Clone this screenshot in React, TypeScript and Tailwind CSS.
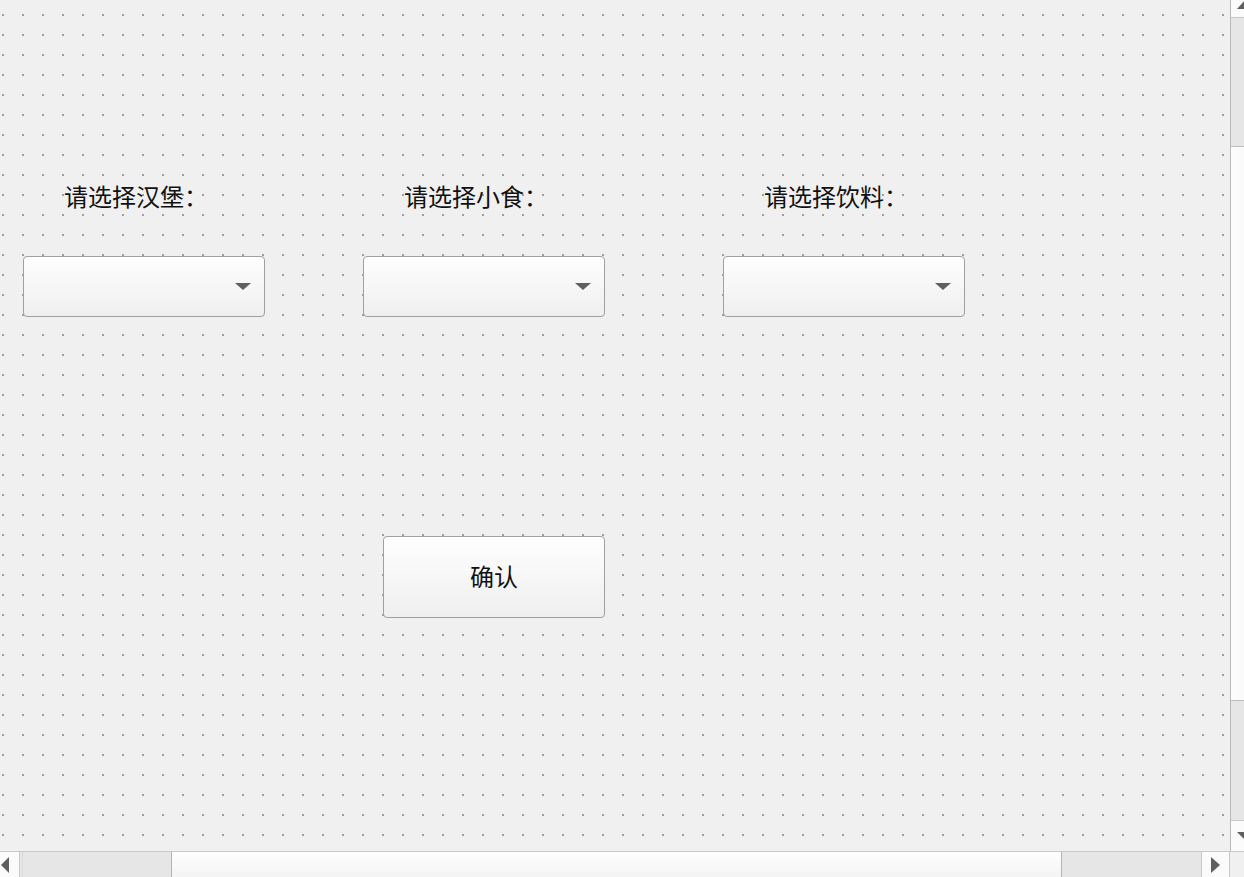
import React from "react";

const font = "font-['Noto_Sans_CJK_SC','Noto_Sans',sans-serif]";

function Combo() {
  return (
    <div className="mt-[48px] flex h-[61px] w-[242px] items-center justify-end rounded-[4px] border border-[#a0a0a0] bg-gradient-to-b from-[#fefefe] to-[#efefef] pr-[13px]">
      <svg width="16" height="7" viewBox="0 0 16 7" className="block">
        <polygon points="0,0 16,0 8,7" fill="#5f5f5f" />
      </svg>
    </div>
  );
}

function Column({ label, gap }: { label: string; gap: number }) {
  return (
    <div className="flex w-[242px] flex-col" style={{ marginLeft: gap }}>
      <div className={`${font} h-[24px] pl-[41px] text-[24px] leading-[24px] text-[#111] whitespace-nowrap`}>{label}</div>
      <Combo />
    </div>
  );
}

export default function App() {
  return (
    <div className="flex h-[877px] w-[1244px] flex-col overflow-hidden bg-[#f0f0f0]">
      <div className="flex h-[851px] w-full">
        {/* canvas */}
        <div className="h-full w-[1231px] border-r border-[#b9b9b9] bg-[#f0f0f0] bg-[radial-gradient(circle_at_1px_1px,#9f9f9f_1px,transparent_1px)] bg-[length:20px_20px] bg-[position:2px_14px]">
          <div className="flex pt-[184px]">
            <Column label="请选择汉堡：" gap={23} />
            <Column label="请选择小食：" gap={98} />
            <Column label="请选择饮料：" gap={118} />
          </div>
          <div className="ml-[383px] mt-[219px] flex h-[82px] w-[222px] items-center justify-center rounded-[4px] border border-[#a0a0a0] bg-gradient-to-b from-[#fefefe] to-[#efefef] pb-[3px]">
            <span className={`${font} text-[24px] leading-[24px] text-[#111]`}>确认</span>
          </div>
        </div>
        {/* vertical scrollbar (clipped) */}
        <div className="h-full w-[13px] overflow-hidden">
          <div className="flex h-full w-[28px] flex-col">
            <div className="relative h-[18px] border-b border-[#c9c9c9] bg-[#fbfbfb]">
              <svg width="16" height="9" viewBox="0 0 16 9" className="absolute left-[6px] top-0">
                <polygon points="0,9 16,9 8,0" fill="#5f5f5f" />
              </svg>
            </div>
            <div className="h-[129px] border-b border-[#bdbdbd] bg-[#e6e6e6]" />
            <div className="h-[554px] border-b border-[#bdbdbd] bg-gradient-to-r from-[#fdfdfd] to-[#f5f5f5]" />
            <div className="h-[120px] border-b border-[#c9c9c9] bg-[#e6e6e6]" />
            <div className="flex flex-1 items-center bg-[#fbfbfb] pl-[6px]">
              <svg width="16" height="8" viewBox="0 0 16 8" className="block">
                <polygon points="0,0 16,0 8,8" fill="#5f5f5f" />
              </svg>
            </div>
          </div>
        </div>
      </div>
      {/* horizontal scrollbar */}
      <div className="flex h-[26px] w-full border-t border-[#c9c9c9]">
        <div className="flex w-[20px] items-center border-r border-[#c9c9c9] bg-[#fbfbfb] pl-[1px]">
          <svg width="8" height="16" viewBox="0 0 8 16" className="block">
            <polygon points="8,0 8,16 0,8" fill="#5f5f5f" />
          </svg>
        </div>
        <div className="w-[152px] border-r border-[#b4b4b4] bg-[#e6e6e6] pl-[2px]">
          <div className="h-full w-px bg-[#dadada]" />
        </div>
        <div className="w-[890px] border-r border-[#b4b4b4] bg-gradient-to-b from-[#fefefe] to-[#f4f4f4]" />
        <div className="w-[140px] border-r border-[#c9c9c9] bg-[#e6e6e6]" />
        <div className="flex w-[28px] items-center justify-center border-r border-[#c9c9c9] bg-[#fbfbfb]">
          <svg width="9" height="16" viewBox="0 0 9 16" className="block">
            <polygon points="0,0 0,16 9,8" fill="#5f5f5f" />
          </svg>
        </div>
        <div className="flex-1 bg-[#f0f0f0]" />
      </div>
    </div>
  );
}
